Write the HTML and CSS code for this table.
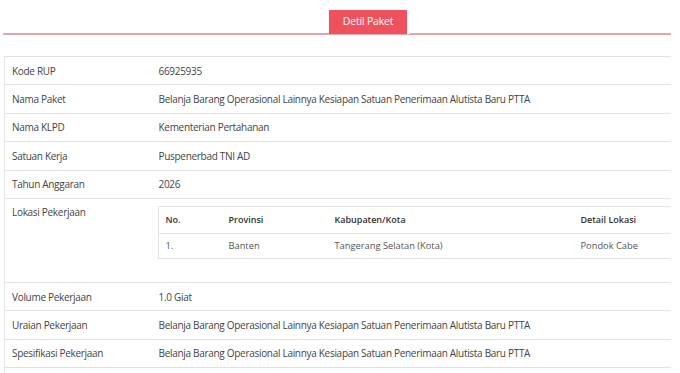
FILE: index.html
```html
<!DOCTYPE html>
<html>
<head>
<meta charset="utf-8">
<link rel="stylesheet" href="styles.css">
</head>
<body>
<div class="page">
  <div class="tabs">
    <span class="tab">Detil Paket</span>
  </div>
  <div class="table-wrap">
    <table class="detail">
      <colgroup><col class="col-lbl"><col class="col-val"></colgroup>
      <tr><td class="lbl">Kode RUP</td><td class="val">66925935</td></tr>
      <tr><td class="lbl">Nama Paket</td><td class="val">Belanja Barang Operasional Lainnya Kesiapan Satuan Penerimaan Alutista Baru PTTA</td></tr>
      <tr><td class="lbl">Nama KLPD</td><td class="val">Kementerian Pertahanan</td></tr>
      <tr><td class="lbl">Satuan Kerja</td><td class="val">Puspenerbad TNI AD</td></tr>
      <tr><td class="lbl">Tahun Anggaran</td><td class="val">2026</td></tr>
      <tr class="lokasi">
        <td class="lbl top">Lokasi Pekerjaan</td>
        <td class="val top">
          <table class="inner">
            <tr><th class="c1">No.</th><th class="c2">Provinsi</th><th class="c3">Kabupaten/Kota</th><th class="c4">Detail Lokasi</th></tr>
            <tr><td>1.</td><td>Banten</td><td>Tangerang Selatan (Kota)</td><td>Pondok Cabe</td></tr>
          </table>
        </td>
      </tr>
      <tr><td class="lbl">Volume Pekerjaan</td><td class="val">1.0 Giat</td></tr>
      <tr><td class="lbl">Uraian Pekerjaan</td><td class="val">Belanja Barang Operasional Lainnya Kesiapan Satuan Penerimaan Alutista Baru PTTA</td></tr>
      <tr><td class="lbl">Spesifikasi Pekerjaan</td><td class="val">Belanja Barang Operasional Lainnya Kesiapan Satuan Penerimaan Alutista Baru PTTA</td></tr>
      <tr><td class="lbl">&nbsp;</td><td class="val">&nbsp;</td></tr>
    </table>
  </div>
</div>
</body>
</html>
```

FILE: styles.css
```css
html, body {
  margin: 0;
  padding: 0;
  background: #fff;
}
body {
  font-family: "Open Sans", "Noto Sans", sans-serif;
  color: #444;
  font-size: 10px;
  letter-spacing: -0.3px;
}
.page {
  width: 680px;
  height: 373px;
  overflow: hidden;
}
.tabs {
  margin: 0 9px 0 3px;
  height: 33px;
  border-bottom: 2px solid #e2a7ae;
  position: relative;
}
.tab {
  position: absolute;
  left: 326px;
  top: 10px;
  width: 78px;
  height: 24px;
  line-height: 23px;
  background: #ef525c;
  color: #fff;
  text-align: center;
  font-size: 10.5px;
  letter-spacing: -0.2px;
  border-right: 3px solid #fff;
}
.table-wrap {
  margin: 21px 0 0 4px;
  width: 667px;
  overflow: hidden;
}
.detail {
  width: 690px;
  table-layout: fixed;
  border-collapse: collapse;
  border: 1px solid #e6e6e6;
}
.col-lbl { width: 153px; }
.detail > tbody > tr > td {
  border-top: 1px solid #e3e3e3;
  height: 27.4px;
  padding: 0 0 0 7px;
  vertical-align: middle;
  white-space: nowrap;
  overflow: hidden;
}
.detail td.val {
  padding-left: 0;
}
.detail td.top {
  vertical-align: top;
  padding-top: 7px;
}
.detail td.lbl.top {
  padding-top: 6px;
}
.detail td.val.top {
  padding-left: 0;
  padding-bottom: 23px;
}
.detail td.val:not(.top) {
  padding-left: 1px;
}
.inner {
  width: 560px;
  border-collapse: collapse;
  border: 1px solid #e3e3e3;
  font-size: 9.3px;
  letter-spacing: 0;
}
.inner th, .inner td {
  text-align: left;
  padding: 0 0 0 7px;
  white-space: nowrap;
}
.inner th {
  font-weight: 600;
  font-size: 9px;
  height: 25.6px;
  border-bottom: 1px solid #e3e3e3;
  color: #333;
}
.inner td {
  height: 24.4px;
  color: #555;
}
.inner .c1 { width: 56px; }
.inner .c2 { width: 99px; }
.inner .c3 { width: 239px; }
```
